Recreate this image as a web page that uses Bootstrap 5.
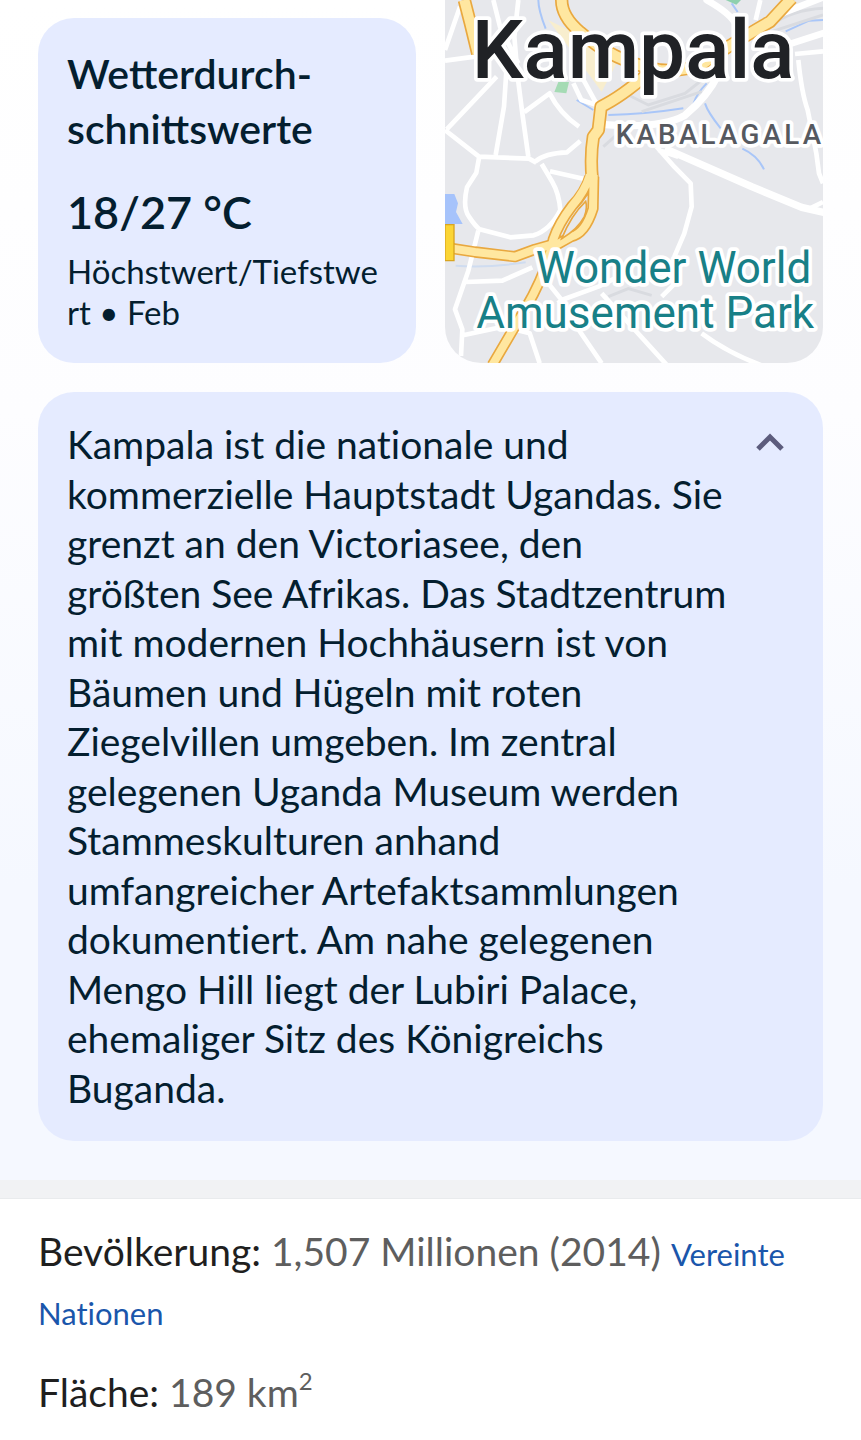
<!DOCTYPE html>
<html lang="de">
<head>
<meta charset="utf-8">
<meta name="viewport" content="width=device-width, initial-scale=1">
<title>Kampala</title>
<link href="https://cdn.jsdelivr.net/npm/bootstrap@5.3.0/dist/css/bootstrap.min.css" rel="stylesheet">
<style>
  body { font-family: Lato, "Open Sans", sans-serif; background: #fff; color: #1f1f1f; }
  .overview { background: linear-gradient(#fff 0, #fdfdff 35%, #f5f8ff 75%, #f5f8ff); padding: 0 38px 39px; }
  .tiles { grid-template-columns: repeat(2, minmax(0, 1fr)); gap: 29px; margin-bottom: 29px; }
  .panel { background: #e5ebff; border-radius: 36px; color: #041e2f; }
  .weather { margin-top: 18px; padding: 28px 29px 30px; }
  .weather h2 { font-size: 41px; line-height: 55px; font-weight: 600; margin-bottom: 24px; }
  .temp { font-size: 45px; line-height: 64px; font-weight: 600; margin-bottom: 7px; }
  .range { font-size: 33px; line-height: 41px; word-break: break-all; }
  .map { border-radius: 0 0 36px 36px; overflow: hidden; }
  .map text { font-family: Roboto, sans-serif; paint-order: stroke; stroke: #fff; stroke-width: 22px; stroke-linejoin: round; }
  .about { padding: 28px 29px; font-size: 39px; line-height: 1.27; }
  .about, .facts { font-variant-ligatures: none; }
  .about .toggle { width: 48px; height: 44px; }
  .separator { height: 19px; background: #f1f2f4; border-bottom: 1px solid #e9ebed; }
  .facts { padding: 23px 38px; font-size: 39px; line-height: 59px; }
  .facts dl > div + div { margin-top: 23px; }
  .facts dt, .facts dd { display: inline; font-weight: 400; }
  .facts dd { color: #5e5e5e; }
  .facts a { color: #1a56ab; font-size: 31px; line-height: 1; text-decoration: none; }
  .facts sup { font-size: 24px; line-height: 0; top: -.7em; }
</style>
</head>
<body>
<main>
  <section class="overview">
    <div class="tiles d-grid">
      <article class="panel weather">
        <h2>Wetterdurch-<br>schnittswerte</h2>
        <div class="temp">18/27 °C</div>
        <div class="range">Höchstwert/Tiefstwert • Feb</div>
      </article>
      <a class="map" href="#karte" aria-label="Karte von Kampala">
        <svg class="d-block w-100 h-100" viewBox="30 0 1134 1089" preserveAspectRatio="xMidYMid slice">
          <rect x="30" width="1134" height="1089" fill="#e7e8ec"/>
          <!-- park and water -->
          <path d="M370 246h32l-8 34-36-4z" fill="#a5dbb4"/>
          <path d="M872 0h46l-14 14z" fill="#8fd0ae"/>
          <path d="M30 582h28l11 28-6 26 20 36H30z" fill="#a6c3fb"/>
          <g fill="none" stroke="#a9c6f8" stroke-width="6">
            <path d="M310 0q0 30 22 86M425 300l50 30M520 345q110-2 225-20M810 310q8 26 47 75M922 446q45 20 65 62M890 10l18 26M1052 94l70-32 42-2M815 250q-30 30-40 62"/>
            <path d="M62 797q90 8 210-10" stroke="#cfdcf0"/>
          </g>
          <!-- minor roads -->
          <g fill="none" stroke="#d9dbe0" stroke-width="9">
            <path d="M580 285l60 30 110-35 70-55M1010 75q60-45 154-50M1010 95l154-50M620 335l180-60M505 440l45-40M520 890l60-24 70 20"/>
          </g>
          <g fill="none" stroke="#fff" stroke-width="14" stroke-linejoin="round">
            <path d="M175 0l20 80 55 110M250 0l-12 110 10 120 14 110 18 130M75 20L30 150M30 182l90-12M215 200l-8 120-25 145M185 230L35 388M30 390l102 80 150 6 22 12M132 474l-8 44-28 44q-14 60 6 88 20 30 32 38l92 24 70-6q50-16 80-76-4-50-24-84l-32-54M268 336l76-56q30 60 88 100M300 485q30-26 96-28l40-34M345 514l100 22M415 250l24 50 44 14M440 230l44 80"/>
            <path d="M1090 180q10 100 28 150l26 130 8 60 12 30M1080 162l84-8M962 60l14-60M665 440q50 60 102 110l3 70-22 80-30 70M730 470l-60-20"/>
            <path d="M130 692l-30 120-40 116 22 60-4 80M92 846l110-4 90-40M84 1006l120-26 80 20 30 90M340 850l40 50 110-40 60-30M370 900l130 190M500 880l200 220M680 890l40-40M800 1000q80 60 190 100M1164 606l-40 20"/>
          </g>
          <g fill="none" stroke="#fff" stroke-linecap="round" stroke-linejoin="round">
            <path d="M510 374q170 12 240-28 70-60 98-120M700 450q160 70 250 110l150 62 70 16" stroke-width="22"/>
            <path d="M815 0q80 45 90 80M1000 56l164-64M1040 140l130-42" stroke-width="20"/>
          </g>
          <!-- arterial roads: casing first, then the lighter fill -->
          <path d="M340 60l60 30 150 90-50 95-70-95z" fill="#fff1c2" opacity=".7"/>
          <g fill="none" stroke="#e9a83f" stroke-linejoin="round">
            <path d="M88 0l18 70 22 90M380 0q0 50 55 96 100 90 240 114 70 6 130-20 70-50 200-125L1070-5M640 220q-80 70-142 100l-8 70-15 20q-10 60-3 130" stroke-width="40"/>
            <path d="M30 742l90 14 120 14 60-22 50-14" stroke-width="34"/>
            <path d="M465 530q-16 50-54 88-40 52-56 100-20 100-84 208L172 1095M476 530l-2 96q-24 76-66 84l-50 28" stroke-width="34"/>
          </g>
          <g fill="none" stroke="#ffe7a0" stroke-linejoin="round">
            <path d="M88 0l18 70 22 90M380 0q0 50 55 96 100 90 240 114 70 6 130-20 70-50 200-125L1070-5M640 220q-80 70-142 100l-8 70-15 20q-10 60-3 130" stroke-width="30"/>
            <path d="M30 742l90 14 120 14 60-22 50-14" stroke-width="24"/>
            <path d="M465 525q-16 50-54 93-40 52-56 100-20 100-84 208L172 1095M476 525l-2 101q-24 76-66 84l-50 28" stroke-width="24"/>
          </g>
          <path d="M452 604q6 20-4 46-20 38-68 66 28-70 72-112z" fill="#e7e8ec" stroke="#e9a83f" stroke-width="5"/>
          <path d="M30 674h27v108H30z" fill="#fbd535" stroke="#d9a520" stroke-width="4"/>
          <!-- labels -->
          <text x="110" y="235" font-size="246" font-weight="500" fill="#202226">Kampala</text>
          <text x="542" y="433" font-size="83" font-weight="500" fill="#56595f" letter-spacing=".12em">KABALAGALA</text>
          <g font-size="132" fill="#188087">
            <text x="302" y="849">Wonder World</text>
            <text x="124" y="983">Amusement Park</text>
          </g>
        </svg>
      </a>
    </div>
    <article class="panel about d-flex justify-content-between align-items-start">
      <p class="mb-0">Kampala ist die nationale und<br>kommerzielle Hauptstadt Ugandas. Sie<br>grenzt an den Victoriasee, den<br>größten See Afrikas. Das Stadtzentrum<br>mit modernen Hochhäusern ist von<br>Bäumen und Hügeln mit roten<br>Ziegelvillen umgeben. Im zentral<br>gelegenen Uganda Museum werden<br>Stammeskulturen anhand<br>umfangreicher Artefaktsammlungen<br>dokumentiert. Am nahe gelegenen<br>Mengo Hill liegt der Lubiri Palace,<br>ehemaliger Sitz des Königreichs<br>Buganda.</p>
      <button class="toggle btn border-0 p-0 d-flex align-items-center justify-content-center flex-shrink-0" type="button" aria-expanded="true" aria-label="Weniger anzeigen">
        <svg width="28" height="18" viewBox="0 0 28 18" fill="none" stroke="#5c5c7d" stroke-width="5"><path d="M2 16L14 4l12 12"/></svg>
      </button>
    </article>
  </section>
  <div class="separator"></div>
  <section class="facts">
    <dl class="mb-0">
      <div><dt>Bevölkerung:</dt> <dd>1,507 Millionen (2014) <a href="#quelle">Vereinte Nationen</a></dd></div>
      <div><dt>Fläche:</dt> <dd>189 km<sup>2</sup></dd></div>
    </dl>
  </section>
</main>
<script src="https://cdn.jsdelivr.net/npm/bootstrap@5.3.0/dist/js/bootstrap.bundle.min.js"></script>
</body>
</html>
